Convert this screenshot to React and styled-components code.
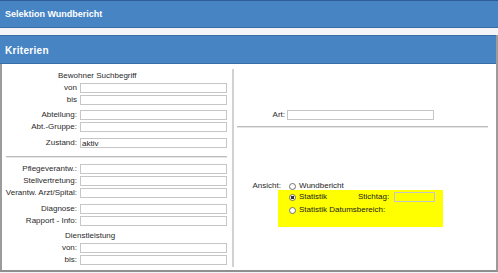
import { createGlobalStyle, styled } from "styled-components";

const GlobalStyle = createGlobalStyle`
  html, body {
    margin: 0;
    padding: 0;
    background: #f2f4f8;
  }
  body {
    font-family: "Liberation Sans", Arial, sans-serif;
    font-size: 8px;
    color: #2a2a2a;
  }
`;

function App() {
  return (
    <>
      <GlobalStyle />
      <Page>
        <TitleBar>Selektion Wundbericht</TitleBar>
        <Panel>
          <PanelHeader>Kriterien</PanelHeader>
          <PanelBody>
            <LeftColumn>
              <Heading $indent={56}>Bewohner Suchbegriff</Heading>
              <Group>
                <Field label="von" />
                <Field label="bis" />
              </Group>
              <Group $gap={3}>
                <Field label="Abteilung:" />
                <Field label="Abt.-Gruppe:" />
              </Group>
              <Group $gap={4}>
                <Field label="Zustand:" value="aktiv" />
              </Group>
              <Separator $left={4} $right={5} $top={6} $bottom={6} />
              <Group>
                <Field label="Pflegeverantw.:" />
                <Field label="Stellvertretung:" />
                <Field label="Verantw. Arzt/Spital:" />
              </Group>
              <Group $gap={4}>
                <Field label="Diagnose:" />
                <Field label="Rapport - Info:" />
              </Group>
              <Heading $indent={63} $top={3}>Dienstleistung</Heading>
              <Group>
                <Field label="von:" />
                <Field label="bis:" />
              </Group>
            </LeftColumn>
            <Divider />
            <RightColumn>
              <ArtRow>
                <RightLabel $width={51}>Art:</RightLabel>
                <TextBox readOnly defaultValue="" $width={147} />
              </ArtRow>
              <Separator $left={3} $right={8} $top={4} $bottom={0} />
              <AnsichtRow>
                <RightLabel $width={47}>Ansicht:</RightLabel>
                <Options>
                  <OptionRow $indent={11}>
                    <Radio />
                    <OptionText>Wundbericht</OptionText>
                  </OptionRow>
                  <Highlight>
                    <OptionRow>
                      <OptionCell>
                        <Radio $checked />
                        <OptionText>Statistik</OptionText>
                      </OptionCell>
                      <OptionText>Stichtag:</OptionText>
                      <TextBox readOnly defaultValue="" $width={41} $clear />
                    </OptionRow>
                    <OptionRow>
                      <Radio />
                      <OptionText>Statistik Datumsbereich:</OptionText>
                    </OptionRow>
                  </Highlight>
                </Options>
              </AnsichtRow>
            </RightColumn>
          </PanelBody>
        </Panel>
      </Page>
    </>
  );
}

function Field({ label, value = "" }) {
  return (
    <FieldRow>
      <FieldLabel>{label}</FieldLabel>
      <TextBox readOnly defaultValue={value} $width={147} />
    </FieldRow>
  );
}

const Page = styled.div`
  width: 498px;
  height: 273px;
  overflow: hidden;
  display: flex;
  flex-direction: column;
`;

const TitleBar = styled.div`
  height: 26px;
  display: flex;
  align-items: center;
  padding: 0 5px;
  background: #4784c4;
  border-top: 1px solid #2f5f98;
  border-bottom: 1px solid #3a6ca7;
  color: #fff;
  font-weight: bold;
  font-size: 9px;
  margin-bottom: 7px;
`;

const Panel = styled.div`
  width: 496px;
  height: 235px;
  background: #fff;
  border-right: 2px solid #9b9b9b;
  border-bottom: 2px solid #8f8f8f;
  display: flex;
  flex-direction: column;
`;

const PanelHeader = styled.div`
  height: 25px;
  display: flex;
  align-items: center;
  padding: 2px 5px 0;
  background: #4784c4;
  border-top: 1px solid #3a6ca7;
  border-bottom: 1px solid #3a6ca7;
  color: #fff;
  font-weight: bold;
  font-size: 10px;
  letter-spacing: 0.3px;
`;

const PanelBody = styled.div`
  flex: 1;
  display: grid;
  grid-template-columns: 230px 2px 1fr;
  border-left: 2px solid #9b9b9b;
`;

const LeftColumn = styled.div`
  display: flex;
  flex-direction: column;
  padding-top: 7px;
`;

const Heading = styled.div`
  line-height: 10px;
  padding-left: ${(p) => p.$indent}px;
  margin: ${(p) => p.$top || 0}px 0 2px;
  white-space: nowrap;
`;

const Group = styled.div`
  display: flex;
  flex-direction: column;
  margin-top: ${(p) => p.$gap || 0}px;
`;

const FieldRow = styled.div`
  height: 12px;
  display: flex;
  align-items: flex-start;
  gap: 3px;
`;

const FieldLabel = styled.span`
  width: 75px;
  text-align: right;
  line-height: 10px;
  white-space: nowrap;
`;

const TextBox = styled.input`
  box-sizing: border-box;
  width: ${(p) => p.$width}px;
  height: 10px;
  margin: 0;
  padding: 0 1px;
  border: 1px solid #c6c6c6;
  background: ${(p) => (p.$clear ? "transparent" : "#fff")};
  font-family: inherit;
  font-size: 8px;
  color: #222;
  outline: none;
`;

const Separator = styled.div`
  height: 0;
  border-top: 1px solid #bdbdbd;
  border-bottom: 1px solid #e4e4e4;
  margin: ${(p) => p.$top}px ${(p) => p.$right}px ${(p) => p.$bottom}px
    ${(p) => p.$left}px;
`;

const Divider = styled.div`
  background: #d2d2d2;
  margin: 5px 0 3px;
`;

const RightColumn = styled.div`
  display: flex;
  flex-direction: column;
`;

const ArtRow = styled.div`
  height: 12px;
  margin-top: 46px;
  display: flex;
  align-items: flex-start;
  gap: 2px;
`;

const RightLabel = styled.span`
  width: ${(p) => p.$width}px;
  flex-shrink: 0;
  text-align: right;
  line-height: 10px;
  white-space: nowrap;
`;

const AnsichtRow = styled.div`
  margin-top: 53px;
  display: flex;
  align-items: flex-start;
`;

const Options = styled.div`
  margin-left: -3px;
  display: flex;
  flex-direction: column;
`;

const OptionRow = styled.div`
  height: 10px;
  display: flex;
  align-items: center;
  padding-left: ${(p) => p.$indent || 0}px;
`;

const OptionCell = styled.div`
  width: 66px;
  display: flex;
  align-items: center;
`;

const OptionText = styled.span`
  margin-left: 3px;
  margin-right: 5px;
  line-height: 10px;
  white-space: nowrap;
  color: #222;
`;

const Radio = styled.span`
  box-sizing: border-box;
  width: 7px;
  height: 7px;
  flex-shrink: 0;
  border-radius: 50%;
  border: 1px solid #6f6f6f;
  background: ${(p) =>
    p.$checked
      ? "radial-gradient(circle, #333 0 1.6px, #fff 1.8px)"
      : "#fff"};
`;

const Highlight = styled.div`
  width: 165px;
  height: 37px;
  box-sizing: border-box;
  margin-top: -1px;
  padding: 2px 0 0 11px;
  background: #ffff00;
  display: flex;
  flex-direction: column;
  gap: 3px;
`;

export default App;
